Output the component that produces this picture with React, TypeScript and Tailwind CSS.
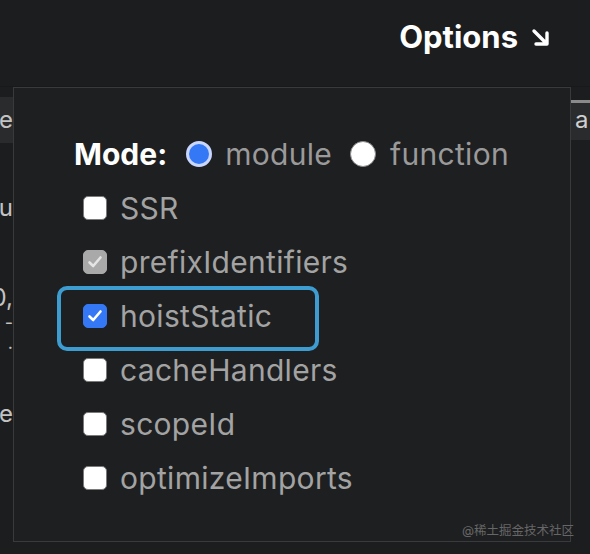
import React from "react";

const font = { fontFamily: "Inter, 'Noto Sans', 'Noto Sans CJK SC', sans-serif" };

function Radio({ checked }: { checked?: boolean }) {
  return checked ? (
    <span className="w-[26px] h-[26px] rounded-full bg-[#3478f6] border-[3px] border-[#c9d6ff] shrink-0" />
  ) : (
    <span className="w-[26px] h-[26px] rounded-full bg-white border border-[#8a8a8a] shrink-0" />
  );
}

function Check({ state }: { state: "off" | "on" | "disabled" }) {
  const bg =
    state === "on"
      ? "bg-[#3478f6] border-[#3478f6]"
      : state === "disabled"
      ? "bg-[#a9a9a9] border-[#a9a9a9]"
      : "bg-white border-[#7a7a7a]";
  return (
    <span
      className={`w-[24px] h-[24px] rounded-[5px] border flex items-center justify-center shrink-0 ${bg}`}
    >
      {state !== "off" && (
        <svg width="16" height="16" viewBox="0 0 16 16" fill="none">
          <path
            d="M2.5 8.5 L6.2 12 L13.5 3.5"
            stroke={state === "on" ? "#ffffff" : "#e4e4e4"}
            strokeWidth="2.6"
            strokeLinecap="round"
            strokeLinejoin="round"
          />
        </svg>
      )}
    </span>
  );
}

const options: { name: string; state: "off" | "on" | "disabled" }[] = [
  { name: "SSR", state: "off" },
  { name: "prefixIdentifiers", state: "disabled" },
  { name: "hoistStatic", state: "on" },
  { name: "cacheHandlers", state: "off" },
  { name: "scopeId", state: "off" },
  { name: "optimizeImports", state: "off" },
];

export default function App() {
  return (
    <div
      className="w-[590px] h-[554px] bg-[#1c1d1f] relative overflow-hidden"
      style={font}
    >
      {/* header */}
      <div className="h-[87px] flex justify-end items-start pt-[17px] pr-[40px] border-b border-[#18191a]">
        <div className="flex items-center gap-[13px] text-white">
          <span className="text-[31px] font-bold leading-[40px]">Options</span>
          <svg width="19" height="19" viewBox="0 0 19 19" fill="none">
            <path
              d="M3 3 L15.5 15.5 M16 5 L16 16 L5 16"
              stroke="#ffffff"
              strokeWidth="3.4"
              strokeLinecap="round"
              strokeLinejoin="round"
            />
          </svg>
        </div>
      </div>

      <div className="flex">
        {/* left editor fragments */}
        <div className="w-[13px] shrink-0 overflow-hidden flex flex-col text-[24px] text-[#c3c3c3] leading-[30px]">
          <div className="mt-[10px] h-[46px] bg-[#2a2b2d] flex items-center justify-end whitespace-nowrap">
            App.vue
          </div>
          <div className="mt-[50px] flex justify-end whitespace-nowrap">menu</div>
          <div className="mt-[60px] flex justify-end whitespace-nowrap">(0,</div>
          <div className="flex justify-end whitespace-nowrap text-[18px] leading-[20px]">-</div>
          <div className="flex justify-end whitespace-nowrap text-[18px] leading-[20px]">.</div>
          <div className="mt-[46px] flex justify-end whitespace-nowrap">ne</div>
        </div>

        {/* options panel */}
        <div className="w-[558px] h-[455px] shrink-0 border border-[#393a3c] bg-[#1e1f21] pl-[60px] pt-[39px]">
          <div className="h-[54px] flex items-center text-[30px] leading-[36px]">
            <span className="font-bold text-white mr-[19px]">Mode:</span>
            <Radio checked />
            <span className="text-[#9a9a9a] tracking-[0.3px] ml-[13px] mr-[18px]">module</span>
            <Radio />
            <span className="text-[#9a9a9a] tracking-[0.3px] ml-[14px]">function</span>
          </div>
          {options.map((o) => (
            <div
              key={o.name}
              className="relative h-[54px] flex items-center pl-[9px] gap-[13px] text-[30px] leading-[36px] tracking-[0.3px] text-[#a3a3a3]"
            >
              <Check state={o.state} />
              <span>{o.name}</span>
              {o.name === "hoistStatic" && (
                <span className="absolute left-[-17px] top-[-3px] w-[262px] h-[65px] border-[4px] border-[#3d9dd0] rounded-[10px]" />
              )}
            </div>
          ))}
        </div>

        {/* right tab fragment */}
        <div className="flex-1 overflow-hidden">
          <div className="mt-[13px] h-[40px] border-t-[3px] border-[#8a8a8a] bg-[#2a2b2d] pl-[4px] text-[24px] leading-[34px] text-[#d0d0d0] whitespace-nowrap">
            a
          </div>
        </div>
      </div>

      {/* watermark */}
      <div className="absolute left-[462px] top-[523px] text-[12.5px] leading-[16px] text-[#666666] whitespace-nowrap">
        @稀土掘金技术社区
      </div>
    </div>
  );
}
